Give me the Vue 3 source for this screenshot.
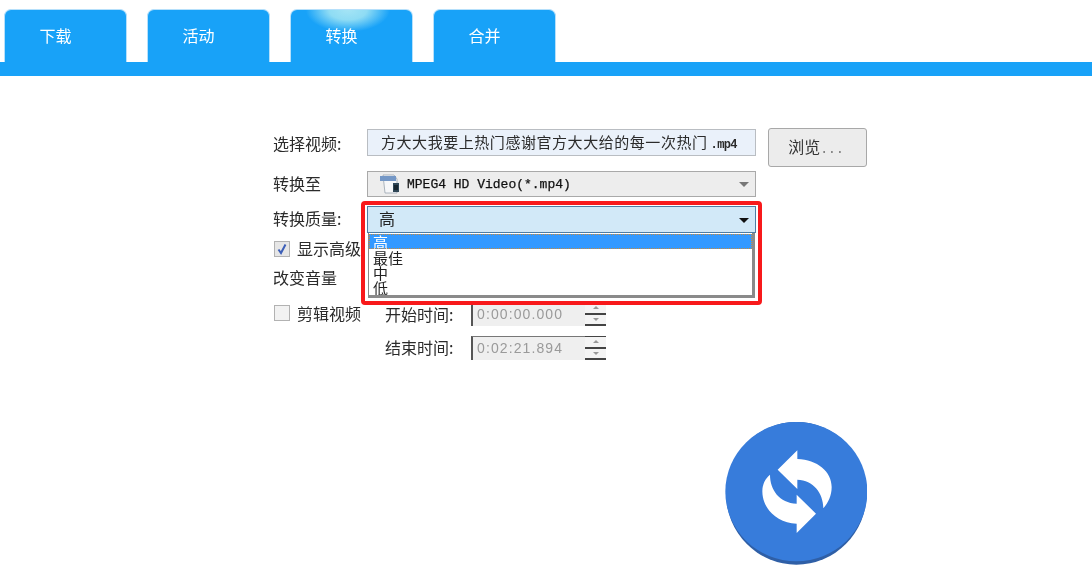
<template>
  <div class="page">
    <div class="tabs">
      <div v-for="t in tabs" :key="t" class="tab" :class="{ active: t === '转换' }">{{ t }}</div>
    </div>
    <div class="band"></div>

    <div class="form">
      <div class="row row-file">
        <span class="label">选择视频:</span>
        <div class="file-input">方大大我要上热门感谢官方大大给的每一次热门<span class="mono">.mp4</span></div>
        <button class="browse">浏览<span class="dots">...</span></button>
      </div>

      <div class="row row-format">
        <span class="label">转换至</span>
        <div class="combo">
          <svg class="format-icon" width="20" height="20" viewBox="0 0 20 20">
            <path d="M3 1H14L17 5V19H5Z" fill="#f6f7f9" stroke="#8d9aa6" stroke-width=".7" />
            <path d="M0 2H16V7H0Z" fill="#7497c6" />
            <rect x="13" y="9" width="6" height="9" fill="#2f4656" />
            <rect x="14" y="11" width="4" height="5" fill="#17252f" />
          </svg>
          <span class="format-text">MPEG4 HD Video(*.mp4)</span>
          <i class="arrow grey"></i>
        </div>
      </div>

      <div class="row row-quality">
        <span class="label">转换质量:</span>
        <div class="quality">
          <div class="combo combo-open">
            <span class="value">高</span>
            <i class="arrow"></i>
          </div>
          <ul class="dropdown">
            <li v-for="(q, i) in qualities" :key="q" :class="{ selected: i === 0 }">{{ q }}</li>
          </ul>
          <div class="callout"></div>
        </div>
      </div>

      <div class="row row-advanced">
        <span class="check checked">
          <svg width="12" height="12" viewBox="0 0 12 12"><path d="M2.5 6.5 5 10 9.5 1.5" fill="none" stroke="#3d5fb8" stroke-width="2" /></svg>
        </span>
        <span class="check-label">显示高级:</span>
      </div>

      <div class="row row-volume">
        <span class="label">改变音量</span>
      </div>

      <div class="row row-clip">
        <span class="check"></span>
        <span class="check-label clip-label">剪辑视频</span>
        <span class="time-label">开始时间:</span>
        <div class="spin">
          <span class="spin-value">0:00:00.000</span>
          <span class="spin-btns"><i class="up"></i><i class="down"></i></span>
        </div>
      </div>

      <div class="row row-end">
        <span class="time-label">结束时间:</span>
        <div class="spin">
          <span class="spin-value">0:02:21.894</span>
          <span class="spin-btns"><i class="up"></i><i class="down"></i></span>
        </div>
      </div>
    </div>

    <div class="convert">
      <svg width="142" height="144" viewBox="45 37 426 432">
        <ellipse cx="259" cy="251" rx="211" ry="214" fill="#2f5fa6" />
        <ellipse cx="259" cy="246" rx="213" ry="209" fill="#377cdb" />
        <path d="M203 180 262 122V148C322 150 365 186 365 232 365 258 354 280 340 296 340 250 310 212 262 210V238Z" fill="#fff" />
        <path d="M318 312 260 370V342C200 340 157 296 157 245 157 224 166 206 180 195 180 240 208 280 260 282V255Z" fill="#fff" />
      </svg>
    </div>
  </div>
</template>

<script setup>
const tabs = ['下载', '活动', '转换', '合并']
const qualities = ['高', '最佳', '中', '低']
</script>

<style>
body {
  background: #fff;
}
</style>

<style scoped>
.page {
  position: relative;
  width: 1092px;
  height: 571px;
  overflow: hidden;
  background: #fff;
  font-family: "Noto Sans CJK SC", "Liberation Sans", sans-serif;
  font-size: 16px;
  color: #2b2b2b;
  filter: blur(.3px);
}
.tabs {
  display: flex;
  gap: 20px;
  padding: 9px 0 0 4px;
}
.tab {
  width: 123px;
  height: 53px;
  box-sizing: border-box;
  padding-right: 20px;
  padding-bottom: 3px;
  display: flex;
  align-items: center;
  justify-content: center;
  background: #18a2f8;
  border: 1px solid #b6e0fb;
  border-bottom: 0;
  border-radius: 7px 7px 0 0;
  color: #fff;
}
.tab.active {
  background: radial-gradient(ellipse 42px 22px at 47% 0, #a4e4f5 0%, #8fdcf4 45%, #18a2f8 100%);
}
.band {
  height: 14px;
  background: #18a2f8;
}
.form {
  display: flex;
  flex-direction: column;
  margin-left: 273px;
  width: 600px;
}
.row {
  display: flex;
  align-items: center;
}
.label {
  width: 94px;
  flex: none;
}
.row-file {
  margin-top: 52px;
  height: 38px;
  align-items: flex-start;
}
.row-file .label {
  padding-top: 3px;
  line-height: 24px;
}
.file-input {
  width: 389px;
  height: 27px;
  margin-top: 1px;
  box-sizing: border-box;
  padding-left: 13px;
  line-height: 24px;
  font-size: 15px;
  white-space: nowrap;
  background: #eaf1fa;
  border: 1px solid #b9bdc2;
  letter-spacing: .55px;
}
.mono {
  margin-left: 3px;
  font-family: "Liberation Mono", monospace;
  font-size: 12px;
  font-weight: bold;
  letter-spacing: -.6px;
}
.browse {
  width: 99px;
  height: 39px;
  margin-left: 12px;
  padding: 0 3px 4px 0;
  background: #ececec;
  border: 1px solid #a8a8a8;
  border-radius: 3px;
  font: inherit;
  color: #333;
}
.dots {
  font-family: "Liberation Mono", monospace;
  font-size: 13px;
  color: #777;
}
.row-format {
  margin-top: 5px;
  height: 26px;
}
.row-format .label {
  padding-bottom: 2px;
}
.combo {
  position: relative;
  width: 389px;
  height: 26px;
  box-sizing: border-box;
  display: flex;
  align-items: center;
  background: #ededed;
  border: 1px solid #a9a9a9;
}
.format-icon {
  margin-left: 12px;
  flex: none;
}
.format-text {
  margin-left: 7px;
  font-family: "Liberation Mono", monospace;
  font-size: 13px;
  color: #111;
  -webkit-text-stroke: .25px #111;
}
.arrow {
  position: absolute;
  right: 6px;
  top: 50%;
  margin-top: -2px;
  border-left: 5px solid transparent;
  border-right: 5px solid transparent;
  border-top: 5px solid #111;
}
.arrow.grey {
  border-top-color: #777;
}
.row-quality {
  margin-top: 9px;
  height: 27px;
}
.row-quality .label {
  padding-bottom: 4px;
}
.quality {
  position: relative;
  width: 389px;
}
.combo-open {
  height: 27px;
  background: #d2e9f8;
  border: 1px solid #4f7da3;
}
.value {
  margin-left: 11px;
  margin-bottom: 4px;
  color: #222;
}
.dropdown {
  position: absolute;
  left: 1px;
  top: 27px;
  width: 387px;
  height: 65px;
  box-sizing: border-box;
  margin: 0;
  padding: 1px 0 0;
  list-style: none;
  overflow: hidden;
  background: #fff;
  border: 1px solid #8a8a8a;
  border-width: 0 3px 3px 1px;
  z-index: 2;
}
.dropdown li {
  height: 15px;
  line-height: 17px;
  padding-left: 4px;
  font-size: 15px;
  color: #222;
}
.dropdown li.selected {
  line-height: 15px;
  background: #3399ff;
  color: #fff;
  outline: 1px dotted #c98a3a;
  outline-offset: -1px;
}
.callout {
  position: absolute;
  left: -6px;
  top: -5px;
  width: 401px;
  height: 104px;
  box-sizing: border-box;
  border: 4px solid #f8191b;
  border-radius: 4px;
  z-index: 3;
}
.row-advanced {
  margin-top: 8px;
  height: 16px;
}
.check {
  width: 16px;
  height: 16px;
  flex: none;
  box-sizing: border-box;
  margin-left: 1px;
  display: flex;
  align-items: center;
  justify-content: center;
  background: #f2f2f2;
  border: 1px solid #b2b2b2;
}
.check.checked {
  background: #e6e6e6;
}
.check-label {
  margin-left: 7px;
  padding-bottom: 2px;
}
.row-volume {
  margin-top: 14px;
  height: 16px;
}
.row-volume .label {
  padding-bottom: 4px;
}
.row-clip {
  margin-top: 13px;
  height: 27px;
}
.clip-label {
  width: 88px;
  flex: none;
}
.row-clip .check {
  margin-top: -1px;
}
.time-label {
  width: 86px;
  flex: none;
}
.row-end {
  margin-top: 7px;
  height: 27px;
  padding-left: 112px;
}
.row-end .time-label {
  padding-bottom: 2px;
}
.spin {
  width: 135px;
  height: 24px;
  box-sizing: border-box;
  display: flex;
  align-items: center;
  justify-content: space-between;
  background: #efefef;
  border-left: 2px solid #555;
  border-top: 1px solid #777;
  padding-left: 4px;
}
.spin-value {
  font-family: "Liberation Sans", sans-serif;
  font-size: 14px;
  letter-spacing: 1.1px;
  color: #9a9a9a;
}
.spin-btns {
  width: 21px;
  height: 100%;
  display: flex;
  flex-direction: column;
  background: #f4f4f4;
  border-top: 1px solid #444;
}
.spin-btns i {
  flex: 1;
  position: relative;
  border-bottom: 2px solid #444;
}
.spin-btns i::after {
  content: '';
  position: absolute;
  left: 8px;
  top: 3px;
  border-left: 3px solid transparent;
  border-right: 3px solid transparent;
}
.spin-btns .up::after {
  border-bottom: 3px solid #999;
}
.spin-btns .down::after {
  border-top: 3px solid #999;
}
.convert {
  position: absolute;
  left: 725px;
  top: 422px;
}
</style>
